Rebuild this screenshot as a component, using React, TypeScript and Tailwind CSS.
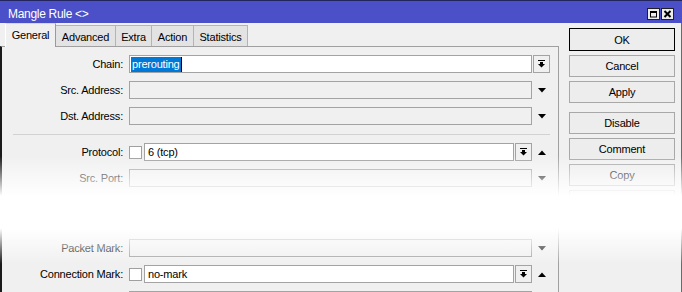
import React from "react";

function DropIcon() {
  return (
    <svg width="7" height="8" viewBox="0 0 7 8" className="block">
      <rect x="0" y="0" width="7" height="1" fill="#000" />
      <rect x="2" y="2" width="3" height="2" fill="#000" />
      <polygon points="0,4 7,4 3.5,7.5" fill="#000" />
    </svg>
  );
}

function TriDown() {
  return (
    <svg width="8" height="5" viewBox="0 0 8 5" className="block">
      <polygon points="0,0 8,0 4,4.5" fill="#000" />
    </svg>
  );
}

function TriUp() {
  return (
    <svg width="8" height="5" viewBox="0 0 8 5" className="block">
      <polygon points="0,5 8,5 4,0.5" fill="#000" />
    </svg>
  );
}

function Field({
  value,
  white,
  selected,
}: {
  value?: string;
  white?: boolean;
  selected?: boolean;
}) {
  return (
    <div
      className={`flex h-full flex-1 items-center border border-[#a3a3a3] ${
        white ? "bg-white" : "bg-[#f0f0f0]"
      } pl-[1px]`}
    >
      {selected ? (
        <span className="flex h-[15px] items-center border-r border-black bg-[#0078d7] pl-[1px] pr-[1px] pt-[1px] text-white">
          {value}
        </span>
      ) : value ? (
        <span className="pl-[2px] pt-[1px]">{value}</span>
      ) : null}
    </div>
  );
}

function DropBtn() {
  return (
    <div className="ml-[1px] flex h-full w-[17px] items-center justify-center border border-[#a3a3a3] bg-[#f0f0f0]">
      <DropIcon />
    </div>
  );
}

function Slot({ children }: { children?: React.ReactNode }) {
  return (
    <div className="flex h-full w-[18px] items-center justify-center pl-[1px]">
      {children}
    </div>
  );
}

function Check() {
  return <div className="mr-[2px] h-[13px] w-[13px] border border-[#a0a0a0] bg-white" />;
}

function Row({
  label,
  children,
  className = "",
}: {
  label: string;
  children: React.ReactNode;
  className?: string;
}) {
  return (
    <div className={`flex h-[18px] items-center ${className}`}>
      <div className="w-[121px] pt-[1px] text-right">{label}</div>
      <div className="ml-[6px] flex h-full flex-1 items-center">{children}</div>
    </div>
  );
}

function Btn({
  label,
  className = "",
  primary,
}: {
  label: string;
  className?: string;
  primary?: boolean;
}) {
  return (
    <div
      className={`flex w-[106px] items-center justify-center border pt-[1px] ${
        primary ? "h-[23px] border-black" : "h-[22px] border-[#a8a8a8]"
      } bg-[#ededed] ${className}`}
    >
      {label}
    </div>
  );
}

export default function App() {
  const tabs = [
    { label: "Advanced", w: "w-[60px]" },
    { label: "Extra", w: "w-[36px]" },
    { label: "Action", w: "w-[42px]" },
    { label: "Statistics", w: "w-[54px]" },
  ];
  return (
    <div className="relative h-[292px] w-[682px] overflow-hidden bg-[#f0f0f0] font-['Liberation_Sans',Arial,sans-serif] text-[11px] leading-none tracking-[-0.2px] text-black">
      {/* title bar */}
      <div className="flex h-[23px] items-center border-t border-[#23255e] bg-[#4b4fc8] pl-[8px] pr-[8px]">
        <span className="mt-[3px] flex-1 text-[12px] tracking-[-0.3px] text-white">Mangle Rule &lt;&gt;</span>
        <div className="mt-[7px] flex gap-[1px] self-start">
          <div className="flex h-[12px] w-[13px] items-center justify-center border border-[#202020] bg-[#ececec]">
            <svg width="9" height="8" viewBox="0 0 9 8" className="block">
              <rect x="1.5" y="1.5" width="6" height="5.5" fill="none" stroke="#000" strokeWidth="1" />
              <rect x="1" y="1" width="7" height="2" fill="#000" />
            </svg>
          </div>
          <div className="flex h-[12px] w-[13px] items-center justify-center border border-[#202020] bg-[#ececec]">
            <svg width="9" height="8" viewBox="0 0 9 8" className="block">
              <path d="M1.5 1 L7.5 7 M7.5 1 L1.5 7" stroke="#000" strokeWidth="2" />
            </svg>
          </div>
        </div>
      </div>

      {/* body */}
      <div className="flex h-[269px] border-r border-[#6a6a6a]">
        <div className="flex w-[559px] flex-col">
          {/* tabs */}
          <div className="flex h-[24px] items-end pl-[5px]">
            <div className="relative z-10 -mb-[1px] flex h-[24px] w-[51px] items-center justify-center border-l border-r border-t border-l-[#ffffff] border-r-[#9a9a9a] border-t-[#d8d8d8] bg-[#f0f0f0]">
              General
            </div>
            {tabs.map((t) => (
              <div
                key={t.label}
                className={`flex h-[21px] ${t.w} items-center justify-center border-r border-t border-[#b4b4b4] bg-[#e3e3e3] pt-[2px]`}
              >
                {t.label}
              </div>
            ))}
          </div>
          {/* panel */}
          <div className="flex flex-1 flex-col border-l-2 border-r border-t border-l-[#1a1a1a] border-r-[#a0a0a0] border-t-[#a0a0a0] pr-[8px] pt-[8px]">
            <Row label="Chain:">
              <Field value="prerouting" white selected />
              <DropBtn />
            </Row>
            <Row label="Src. Address:" className="mt-[8px]">
              <Field />
              <Slot>
                <TriDown />
              </Slot>
            </Row>
            <Row label="Dst. Address:" className="mt-[8px]">
              <Field />
              <Slot>
                <TriDown />
              </Slot>
            </Row>
            <div className="ml-[11px] mt-[9px] h-px bg-[#d2d2d2]" />
            <Row label="Protocol:" className="mt-[8px]">
              <Check />
              <Field value="6 (tcp)" white />
              <DropBtn />
              <Slot>
                <TriUp />
              </Slot>
            </Row>
            <Row label="Src. Port:" className="mt-[8px]">
              <Field />
              <Slot>
                <TriDown />
              </Slot>
            </Row>
            <Row label="Packet Mark:" className="mt-[52px]">
              <Field />
              <Slot>
                <TriDown />
              </Slot>
            </Row>
            <Row label="Connection Mark:" className="mt-[8px]">
              <Check />
              <Field value="no-mark" white />
              <DropBtn />
              <Slot>
                <TriUp />
              </Slot>
            </Row>
            <Row label="" className="mt-[8px]">
              <Field />
              <Slot>
                <TriDown />
              </Slot>
            </Row>
          </div>
        </div>
        {/* right buttons */}
        <div className="flex flex-1 flex-col pl-[10px] pr-[5px] pt-[5px]">
          <Btn label="OK" primary />
          <Btn label="Cancel" className="mt-[4px]" />
          <Btn label="Apply" className="mt-[4px]" />
          <Btn label="Disable" className="mt-[9px]" />
          <Btn label="Comment" className="mt-[4px]" />
          <Btn label="Copy" className="mt-[4px]" />
          <Btn label="Remove" className="mt-[4px]" />
        </div>
      </div>

      {/* torn / faded band */}
      <div className="pointer-events-none absolute left-0 right-0 top-[156px] h-[108px] bg-[linear-gradient(to_bottom,rgba(255,255,255,0)_0%,#fff_37%,#fff_67%,rgba(255,255,255,0)_100%)]" />
    </div>
  );
}
